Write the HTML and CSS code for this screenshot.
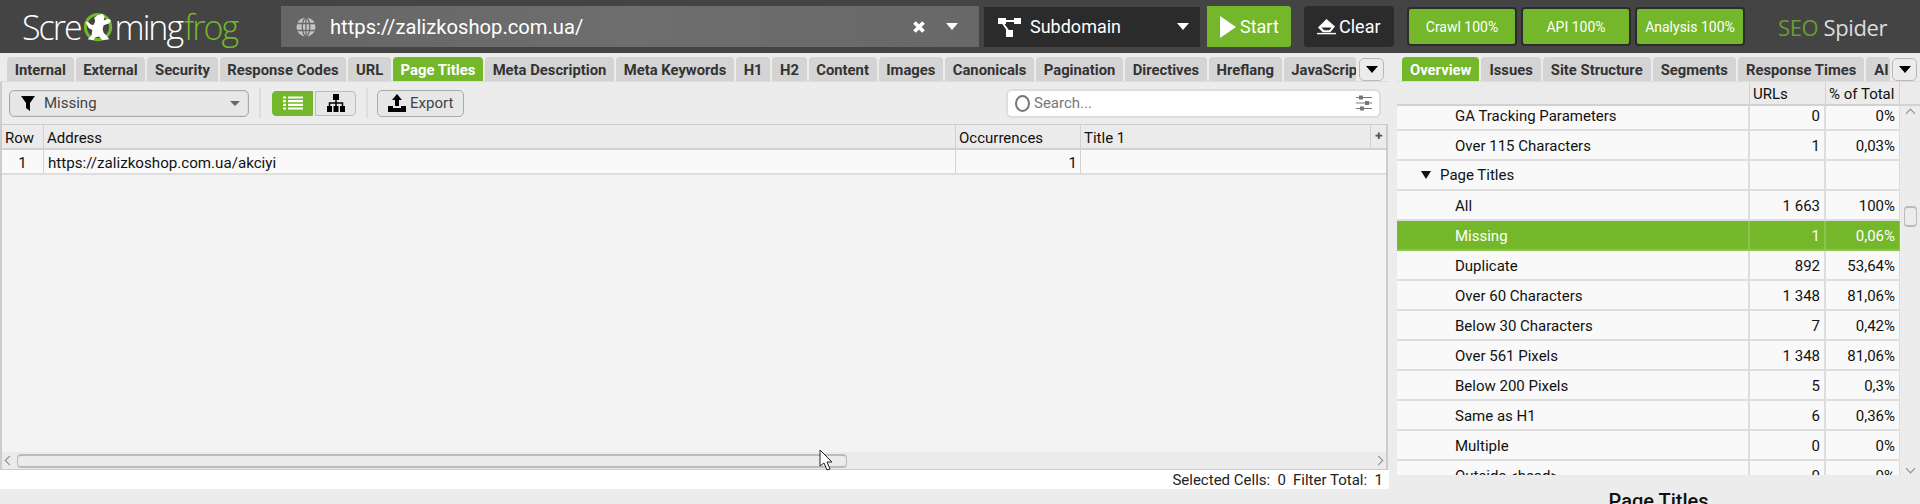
FILE: index.html
```html
<!DOCTYPE html>
<html lang="en">
<head>
<meta charset="utf-8">
<title>Screaming Frog SEO Spider</title>
<link rel="stylesheet" href="styles.css">
</head>
<body>
<header class="top">
  <div class="logo">
    <span class="logo-scre">Scre</span><svg class="frog" viewBox="0 0 32 34" width="30" height="32"><circle cx="16" cy="16" r="13.5" fill="none" stroke="#74b72b" stroke-width="3.2"/><path d="M16 3l5-1 2 3-1 4 5-2 3 2-2 3-6 2-1 4 1 4 3 3 3 4-7 1-4-4-4 1-2 3-6-1 4-4 1-6-4-2-3-6 2-1 3 3 3 1 2-4-1-4z" fill="#fff"/></svg><span class="logo-ming">ming</span><span class="logo-green">frog</span>
  </div>
  <div class="urlbar">
    <svg class="globe" viewBox="0 0 20 20" width="20" height="20"><circle cx="10" cy="10" r="9.5" fill="#c4c4c4"/><path d="M0 6.5h20M0 13.5h20M10 0v20M10 0C5 4 5 16 10 20M10 0c5 4 5 16 0 20" fill="none" stroke="#6a6a6a" stroke-width="1.3"/></svg>
    <span class="url">https://zalizkoshop.com.ua/</span>
    <svg class="xicon" viewBox="0 0 14 14" width="14" height="14"><path d="M2.5 2.5l9 9M11.5 2.5l-9 9" stroke="#fff" stroke-width="3.8" fill="none"/></svg>
    <span class="caret caret-url"></span>
  </div>
  <div class="scope">
    <svg viewBox="0 0 24 20" width="24" height="20"><path d="M5 5l7 10M6 4h12" stroke="#fff" stroke-width="2" fill="none"/><rect x="1" y="1" width="8" height="6" fill="#fff"/><rect x="17" y="1" width="7" height="6" fill="#fff"/><rect x="9" y="13" width="7" height="7" fill="#fff"/></svg>
    <span class="scope-label">Subdomain</span>
    <span class="caret"></span>
  </div>
  <button class="start"><svg viewBox="0 0 18 24" width="18" height="24"><path d="M1 1l16 11L1 23z" fill="#fff"/></svg>Start</button>
  <button class="clear"><svg viewBox="0 0 20 18" width="19" height="17"><path d="M10 1l9 8-5 6H6L1 10z" fill="#fff"/><path d="M4.5 10l3 3h5.5l2.3-3z" fill="#2b2b2b"/><path d="M0 16.5h20" stroke="#fff" stroke-width="1.5"/></svg>Clear</button>
  <div class="progress">Crawl 100%</div>
  <div class="progress">API 100%</div>
  <div class="progress">Analysis 100%</div>
  <div class="brand"><span class="brand-seo">SEO</span> Spider</div>
</header>

<main class="main">
  <section class="left">
    <nav class="tabs tabs-left">
      <span class="tab">Internal</span><span class="tab">External</span><span class="tab">Security</span><span class="tab">Response Codes</span><span class="tab">URL</span><span class="tab active">Page Titles</span><span class="tab">Meta Description</span><span class="tab">Meta Keywords</span><span class="tab">H1</span><span class="tab">H2</span><span class="tab">Content</span><span class="tab">Images</span><span class="tab">Canonicals</span><span class="tab">Pagination</span><span class="tab">Directives</span><span class="tab">Hreflang</span><span class="tab tab-clip">JavaScript</span>
      <span class="tabmenu"><span class="caret caret-dark"></span></span>
    </nav>
    <div class="toolbar">
      <div class="filter">
        <svg viewBox="0 0 14 16" width="14" height="16"><path d="M0 1h14L9 8v8L5 13V8z" fill="#000"/></svg>
        <span class="filter-label">Missing</span>
        <span class="caret caret-grey"></span>
      </div>
      <span class="vsep"></span>
      <div class="viewbtns">
        <span class="viewbtn viewbtn-on"><svg viewBox="0 0 20 14" width="20" height="14"><path d="M0 1.5h3M5 1.5h15M0 5.2h3M5 5.2h15M0 8.9h3M5 8.9h15M0 12.5h3M5 12.5h15" stroke="#fff" stroke-width="2.2"/></svg></span>
        <span class="viewbtn"><svg viewBox="0 0 18 18" width="18" height="18"><rect x="6" y="0" width="6" height="6"/><rect x="0" y="12" width="5" height="6"/><rect x="6.5" y="12" width="5" height="6"/><rect x="13" y="12" width="5" height="6"/><path d="M9 6v6M2.5 12V9h13v3" stroke="#000" stroke-width="1.5" fill="none"/></svg></span>
      </div>
      <span class="vsep vsep-last"></span>
      <button class="export"><svg viewBox="0 0 18 18" width="18" height="18"><path d="M9 0l5 6h-3v6H7V6H4z"/><path d="M0 12h5v2h8v-2h5v6H0z"/></svg>Export</button>
      <div class="search">
        <span class="search-ring"></span>
        <span class="search-text">Search...</span>
        <svg class="sliders" viewBox="0 0 16 16" width="16" height="16"><path d="M0 2.5h16M0 8h16M0 13.5h16" stroke="#777" stroke-width="1"/><rect x="3" y="0.5" width="4" height="4" fill="#777"/><rect x="9" y="6" width="4" height="4" fill="#777"/><rect x="4" y="11.5" width="4" height="4" fill="#777"/></svg>
      </div>
    </div>
    <div class="grid">
      <div class="grow grow-head">
        <span class="c c-row">Row</span><span class="c c-addr">Address</span><span class="c c-occ">Occurrences</span><span class="c c-title">Title 1</span><span class="c c-plus">✚</span>
      </div>
      <div class="grow">
        <span class="c c-row c-center">1</span><span class="c c-addr c-link">https://zalizkoshop.com.ua/akciyi</span><span class="c c-occ c-num">1</span><span class="c c-title"></span>
      </div>
      <div class="grid-empty"></div>
      <div class="hscroll">
        <span class="chev chev-l"></span>
        <span class="hthumb"></span>
        <span class="chev chev-r"></span>
        <svg class="cursor" viewBox="0 0 14 22" width="14" height="22"><path d="M1 1v16l4-3 3 7 3-1-3-7h5z" fill="#fff" stroke="#222" stroke-width="1"/></svg>
      </div>
    </div>
    <footer class="status"><span>Selected Cells:&nbsp; 0</span><span>Filter Total:&nbsp; 1</span></footer>
  </section>

  <section class="right">
    <nav class="tabs tabs-right">
      <span class="tab active">Overview</span><span class="tab">Issues</span><span class="tab">Site Structure</span><span class="tab">Segments</span><span class="tab">Response Times</span><span class="tab tab-clip2">AI</span>
      <span class="tabmenu"><span class="caret caret-dark"></span></span>
    </nav>
    <div class="ov-head">
      <span class="ov-name"></span><span class="ov-urls">URLs</span><span class="ov-pct">% of Total</span><span class="ov-bar"></span>
    </div>
    <div class="ov-body">
      <div class="ov-rows">
        <div class="ov-row ov-row-cut"><span class="ov-name ov-sub">GA Tracking Parameters</span><span class="ov-urls">0</span><span class="ov-pct">0%</span></div>
        <div class="ov-row"><span class="ov-name ov-sub">Over 115 Characters</span><span class="ov-urls">1</span><span class="ov-pct">0,03%</span></div>
        <div class="ov-row"><span class="ov-name ov-parent"><span class="tri"></span>Page Titles</span><span class="ov-urls"></span><span class="ov-pct"></span></div>
        <div class="ov-row"><span class="ov-name ov-sub">All</span><span class="ov-urls">1 663</span><span class="ov-pct">100%</span></div>
        <div class="ov-row ov-sel"><span class="ov-name ov-sub">Missing</span><span class="ov-urls">1</span><span class="ov-pct">0,06%</span></div>
        <div class="ov-row"><span class="ov-name ov-sub">Duplicate</span><span class="ov-urls">892</span><span class="ov-pct">53,64%</span></div>
        <div class="ov-row"><span class="ov-name ov-sub">Over 60 Characters</span><span class="ov-urls">1 348</span><span class="ov-pct">81,06%</span></div>
        <div class="ov-row"><span class="ov-name ov-sub">Below 30 Characters</span><span class="ov-urls">7</span><span class="ov-pct">0,42%</span></div>
        <div class="ov-row"><span class="ov-name ov-sub">Over 561 Pixels</span><span class="ov-urls">1 348</span><span class="ov-pct">81,06%</span></div>
        <div class="ov-row"><span class="ov-name ov-sub">Below 200 Pixels</span><span class="ov-urls">5</span><span class="ov-pct">0,3%</span></div>
        <div class="ov-row"><span class="ov-name ov-sub">Same as H1</span><span class="ov-urls">6</span><span class="ov-pct">0,36%</span></div>
        <div class="ov-row"><span class="ov-name ov-sub">Multiple</span><span class="ov-urls">0</span><span class="ov-pct">0%</span></div>
        <div class="ov-row"><span class="ov-name ov-sub">Outside &lt;head&gt;</span><span class="ov-urls">0</span><span class="ov-pct">0%</span></div>
      </div>
      <div class="vscroll">
        <span class="chev chev-u"></span>
        <span class="vthumb"></span>
        <span class="chev chev-d"></span>
      </div>
    </div>
    <h2 class="chart-title">Page Titles</h2>
  </section>
</main>
</body>
</html>
```
FILE: styles.css
```css
* { box-sizing: border-box; }
html, body { margin: 0; height: 504px; overflow: hidden; }
body { background: #ececec; font-family: Roboto, sans-serif; font-size: 15px; color: #111; }
button { font-family: inherit; margin: 0; cursor: default; }

.top { display: flex; align-items: center; height: 53px; background: #444; }
.logo { display: flex; align-items: center; width: 281px; padding-left: 22px; font-family: "Open Sans", sans-serif; font-weight: 300; font-size: 34px; letter-spacing: -2px; color: #fff; height: 53px; white-space: nowrap; }
.frog { flex: none; margin: 2px 0 0 2px; }
.logo-ming { margin-left: 2px; }
.logo-green { color: #74b72b; margin-left: 2px; }
.urlbar { display: flex; align-items: center; width: 698px; height: 41px; background: linear-gradient(90deg, #666, #6e6e6e 50%, #686868); padding-left: 15px; padding-right: 21px; color: #fff; }
.globe { flex: none; }
.url { flex: 1; margin-left: 14px; font-size: 20.2px; }
.xicon { margin-right: 20px; }
.caret { display: inline-block; width: 0; height: 0; border-left: 6px solid transparent; border-right: 6px solid transparent; border-top: 7px solid #fff; flex: none; }
.scope { display: flex; align-items: center; margin-left: 5px; width: 216px; height: 40px; background: #2b2b2b; color: #fff; padding: 0 11px 0 13px; }
.scope-label { flex: 1; margin-left: 9px; font-size: 18px; }
.start { display: flex; align-items: center; gap: 3px; margin-left: 7px; width: 84px; height: 41px; background: #74b72b; border: 0; border-radius: 0 3px 3px 0; color: #fff; font-size: 18px; padding: 0 0 0 12px; }
.clear { display: flex; align-items: center; gap: 3px; margin-left: 13px; width: 90px; height: 41px; background: #2b2b2b; border: 0; border-radius: 4px; color: #fff; font-size: 18px; padding: 0 0 0 13px; }
.progress { display: flex; align-items: center; justify-content: center; width: 110px; height: 39px; background: #74b72b; border: 2px solid #2b2b2b; border-radius: 4px; color: #fff; font-size: 14px; margin-left: 4px; }
.clear + .progress { margin-left: 13px; }
.brand { margin-left: 33px; font-family: "Open Sans", sans-serif; font-weight: 400; font-size: 22px; letter-spacing: -0.4px; color: #ddd; white-space: nowrap; }
.brand-seo { color: #6a9c32; }

.main { display: flex; height: 451px; }
.left { width: 1389px; height: 436px; display: flex; flex-direction: column; flex: none; }
.right { flex: 1; display: flex; flex-direction: column; padding-left: 8px; min-width: 0; overflow: hidden; }

.tabs { flex: none; display: flex; align-items: flex-end; height: 29px; padding: 4px 0 0 7px; border-bottom: 1px solid #ddd; overflow: hidden; position: relative; gap: 2px; }
.tab { flex: none; height: 24px; line-height: 26px; padding: 0 8px; background: #d4d4d4; border-radius: 4px 4px 0 0; font-weight: 700; font-size: 14.8px; color: #333; white-space: nowrap; }
.tabs-left .tab { padding: 0 7.7px; }
.tab.active { background: #74b72b; color: #fff; }
.tabs-left .tab-clip { width: 72px; overflow: hidden; padding-right: 0; }
.tab-clip2 { width: 24px; overflow: hidden; padding-right: 0; }
.tabmenu { position: absolute; right: 5px; top: 5px; width: 25px; height: 23px; display: flex; align-items: center; justify-content: center; background: #ececec; border: 1px solid #b8b8b8; border-radius: 5px; }
.caret-dark { border-top-color: #000; }
.tabs-right { padding-left: 5px; }
.tabs-right .tabmenu { right: 3px; }

.toolbar { flex: none; display: flex; align-items: center; height: 42px; padding: 0 9px; border-left: 2px solid #ccc; }
.filter { display: flex; align-items: center; width: 240px; height: 27px; margin-left: -2px; border: 1px solid #aaa; border-radius: 5px; background: #e7e7e7; padding: 0 8px 0 11px; box-shadow: inset 0 0 0 1px #ddd; }
.filter-label { flex: 1; margin-left: 9px; color: #444; font-size: 15px; }
.caret-grey { border-top-color: #666; border-left-width: 5px; border-right-width: 5px; border-top-width: 5px; }
.vsep { width: 2px; height: 30px; background: #ddd; margin: 0 11px 0 10px; flex: none; }
.vsep-last { margin-right: 9px; }
.viewbtns { display: flex; gap: 2px; }
.viewbtn { display: flex; align-items: center; justify-content: center; width: 41px; height: 25px; background: #e7e7e7; border: 1px solid #bbb; border-radius: 0 4px 4px 0; }
.viewbtn-on { background: #74b72b; border-color: #74b72b; border-radius: 4px 0 0 4px; }
.export { display: flex; align-items: center; gap: 4px; width: 87px; height: 27px; background: #e7e7e7; border: 1px solid #aaa; border-radius: 5px; padding: 0 0 0 10px; color: #444; font-size: 15px; }
.search { display: flex; align-items: center; margin-left: auto; width: 375px; height: 29px; background: #fff; border: 2px solid #ddd; border-radius: 6px; padding: 0 7px; margin-right: -1px; }
.search-ring { width: 15px; height: 17px; border: 2.5px solid #777; border-radius: 50%; flex: none; }
.search-text { flex: 1; margin-left: 4px; color: #777; font-size: 15px; }

.grid { flex: 1; display: flex; flex-direction: column; border: 2px solid #ccc; border-width: 1px 2px 0 2px; background: #f3f3f3; min-height: 0; margin-right: 1px; }
.grow { flex: none; display: flex; height: 25px; background: #f9f9f9; border-bottom: 2px solid #ddd; }
.grow-head { background: #ebebeb; border-bottom: 2px solid #d2d2d2; }
.c { display: block; height: 100%; line-height: 26px; padding: 0 3px; border-right: 1px solid #d2d2d2; white-space: nowrap; flex: none; }
.c-row { width: 42px; }
.c-center { text-align: center; }
.c-addr { width: 912px; }
.c-link { padding-left: 4px; font-size: 15.15px; }
.c-occ { width: 125px; }
.c-num { text-align: right; }
.c-title { width: 290px; }
.c-plus { width: 16px; border: 0; padding: 0; text-align: center; font-size: 9px; color: #555; line-height: 22px; }
.grow .c-title { border-right: 0; }
.grow-head .c-title { border-right: 1px solid #d2d2d2; }
.grid-empty { flex: 1; }
.hscroll { flex: none; display: flex; align-items: center; height: 18px; background: #ebebeb; position: relative; border-bottom: 1px solid #ccc; padding: 0 4px; }
.hthumb { width: 830px; height: 14px; margin-left: 4px; background: #ebebeb; border: 1px solid #bbb; border-top-width: 2px; border-bottom-width: 2px; border-radius: 4px; flex: none; }
.chev { display: block; width: 7px; height: 7px; border-left: 1px solid #888; border-bottom: 1px solid #888; flex: none; }
.chev-l { transform: rotate(45deg); }
.chev-r { transform: rotate(-135deg); margin-left: auto; }
.cursor { position: absolute; left: 817px; top: -3px; }
.status { flex: none; display: flex; justify-content: flex-end; gap: 7px; height: 19px; line-height: 20px; background: #fff; padding-right: 6px; color: #222; font-size: 15px; }

.ov-head { flex: none; display: flex; height: 24px; background: #ebebeb; border-bottom: 2px solid #d2d2d2; line-height: 25px; }
.ov-head .ov-name { border-right: 1px solid #d2d2d2; }
.ov-body { display: flex; height: 369px; flex: none; overflow: hidden; }
.ov-rows { flex: 1; min-width: 0; }
.ov-row { display: flex; height: 30px; background: #f9f9f9; border-bottom: 2px solid #ddd; line-height: 30px; }
.ov-row-cut { height: 25px; line-height: 20px; }
.ov-name { flex: 1; min-width: 0; border-right: 2px solid #ddd; white-space: nowrap; }
.ov-sub { padding-left: 58px; }
.ov-parent { padding-left: 24px; display: flex; align-items: center; }
.ov-urls { width: 76px; flex: none; text-align: right; padding-right: 4px; border-right: 2px solid #ddd; white-space: nowrap; }
.ov-pct { width: 74px; flex: none; text-align: right; padding-right: 4px; border-right: 1px solid #ddd; white-space: nowrap; }
.ov-head .ov-urls { text-align: left; padding-left: 3px; border-right: 1px solid #d2d2d2; }
.ov-head .ov-pct { text-align: left; padding-left: 3px; border-right: 1px solid #d2d2d2; }
.ov-bar { width: 20px; flex: none; }
.ov-sel { background: #74b72b; color: #fff; border-bottom-color: #8cc44f; }
.ov-sel span { border-right-color: #8cc44f; }
.tri { width: 0; height: 0; border-left: 5px solid transparent; border-right: 5px solid transparent; border-top: 8px solid #111; margin-right: 9px; flex: none; }
.vscroll { width: 20px; flex: none; display: flex; flex-direction: column; align-items: center; background: #ececec; padding-top: 4px; }
.chev-u { transform: rotate(135deg); }
.vthumb { width: 13px; height: 21px; margin-top: 89px; border: 1px solid #bbb; border-width: 2px 1px; border-radius: 4px; flex: none; background: #ececec; }
.chev-d { transform: rotate(-45deg); margin-top: auto; margin-bottom: 3px; }
.chart-title { margin: 15px 0 0; text-align: center; font-size: 20px; font-weight: 500; color: #111; line-height: 22px; flex: none; }
```
